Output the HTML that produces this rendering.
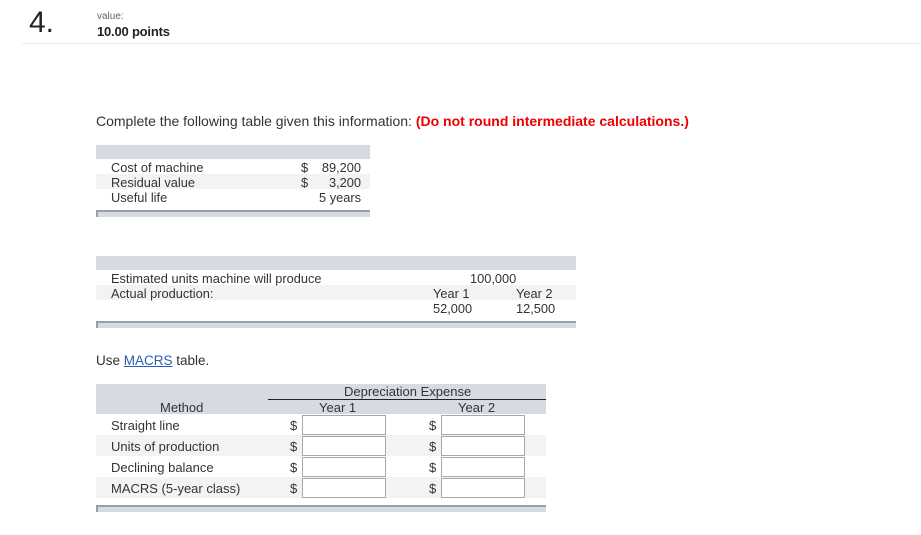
<!DOCTYPE html>
<html><head><style>
body{margin:0;width:921px;height:535px;background:#fff;font-family:"Liberation Sans",Arial,sans-serif;color:#333;position:relative;overflow:hidden}
.a{position:absolute;white-space:nowrap}
.t{font-size:12.8px;line-height:15px}
.u{font-size:13px;line-height:15px}
.band{position:absolute;background:#d6dae3}
.foot{position:absolute;background:#d6dae3;border-top:2px solid #9aa0aa;border-left:2px solid #9aa0aa;height:5px}
.g{position:absolute;background:#f3f3f3}
.in{position:absolute;width:82px;height:18px;border:1px solid #a8a8a8;background:#fff}
</style></head><body>
<div class="a" style="left:29px;top:6px;font-size:30px;color:#222">4.</div>
<div class="a" style="left:97px;top:11px;font-size:10px;color:#666">value:</div>
<div class="a" style="left:97px;top:24px;font-size:13px;color:#222;font-weight:bold;letter-spacing:-0.2px">10.00 points</div>
<div class="a" style="left:22px;top:43px;width:899px;height:1px;background:#eaeaea"></div>

<div class="a" style="left:96px;top:113px;font-size:14px">Complete the following table given this information: <b style="color:#e00">(Do not round intermediate calculations.)</b></div>

<div class="band" style="left:96px;top:145px;width:274px;height:14px"></div>
<div class="g" style="left:96px;top:174px;width:274px;height:15px"></div>
<div class="a t" style="left:111px;top:160px">Cost of machine</div>
<div class="a t" style="left:111px;top:175px">Residual value</div>
<div class="a t" style="left:111px;top:190px">Useful life</div>
<div class="a t" style="left:301px;top:160px">$</div>
<div class="a t" style="left:301px;top:175px">$</div>
<div class="a t" style="right:560px;top:160px">89,200</div>
<div class="a t" style="right:560px;top:175px">3,200</div>
<div class="a t" style="right:560px;top:190px">5 years</div>
<div class="foot" style="left:96px;top:210px;width:272px"></div>

<div class="band" style="left:96px;top:256px;width:480px;height:14px"></div>
<div class="g" style="left:96px;top:285px;width:480px;height:15px"></div>
<div class="a t" style="left:111px;top:271px">Estimated units machine will produce</div>
<div class="a t" style="left:111px;top:286px">Actual production:</div>
<div class="a t" style="left:470px;top:271px">100,000</div>
<div class="a t" style="left:433px;top:286px">Year 1</div>
<div class="a t" style="left:516px;top:286px">Year 2</div>
<div class="a t" style="left:433px;top:301px">52,000</div>
<div class="a t" style="left:516px;top:301px">12,500</div>
<div class="foot" style="left:96px;top:321px;width:478px"></div>

<div class="a" style="left:96px;top:353px;font-size:13.5px">Use <span style="color:#2a5db0;text-decoration:underline">MACRS</span> table.</div>

<div class="band" style="left:96px;top:384px;width:450px;height:30px"></div>
<div class="a u" style="left:344px;top:384px">Depreciation Expense</div>
<div class="a" style="left:268px;top:399px;width:278px;height:1px;background:#222"></div>
<div class="a u" style="left:160px;top:400px">Method</div>
<div class="a u" style="left:319px;top:400px">Year 1</div>
<div class="a u" style="left:458px;top:400px">Year 2</div>
<div class="g" style="left:96px;top:435px;width:450px;height:21px"></div>
<div class="g" style="left:96px;top:477px;width:450px;height:21px"></div>
<div class="a u" style="left:111px;top:418px">Straight line</div>
<div class="a u" style="left:111px;top:439px">Units of production</div>
<div class="a u" style="left:111px;top:460px">Declining balance</div>
<div class="a u" style="left:111px;top:481px">MACRS (5-year class)</div>
<div class="a u" style="left:290px;top:418px">$</div><div class="a u" style="left:429px;top:418px">$</div>
<div class="a u" style="left:290px;top:439px">$</div><div class="a u" style="left:429px;top:439px">$</div>
<div class="a u" style="left:290px;top:460px">$</div><div class="a u" style="left:429px;top:460px">$</div>
<div class="a u" style="left:290px;top:481px">$</div><div class="a u" style="left:429px;top:481px">$</div>
<div class="in" style="left:302px;top:415px"></div><div class="in" style="left:441px;top:415px"></div>
<div class="in" style="left:302px;top:436px"></div><div class="in" style="left:441px;top:436px"></div>
<div class="in" style="left:302px;top:457px"></div><div class="in" style="left:441px;top:457px"></div>
<div class="in" style="left:302px;top:478px"></div><div class="in" style="left:441px;top:478px"></div>
<div class="foot" style="left:96px;top:505px;width:448px"></div>
</body></html>
